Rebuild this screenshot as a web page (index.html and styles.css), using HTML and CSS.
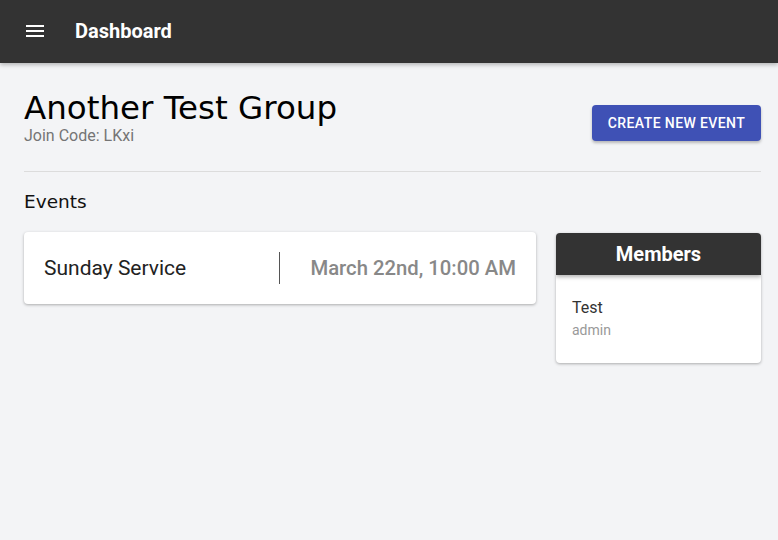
FILE: index.html
```html
<!DOCTYPE html>
<html>
<head>
<meta charset="utf-8">
<link rel="stylesheet" href="styles.css">
</head>
<body>
<header class="appbar">
  <svg class="menu" width="24" height="24" viewBox="0 0 24 24"><path d="M3 18h18v-2H3v2zm0-5h18v-2H3v2zm0-7v2h18V6H3z" fill="#fff"/></svg>
  <span class="appbar-title">Dashboard</span>
</header>
<main class="content">
  <section class="group-head">
    <div>
      <h1 class="group-title">Another Test Group</h1>
      <div class="join-code">Join Code: LKxi</div>
    </div>
    <button class="btn-primary">Create New Event</button>
  </section>
  <hr class="divider">
  <h2 class="section-title">Events</h2>
  <section class="columns">
    <div class="events">
      <div class="event-card">
        <span class="event-name">Sunday Service</span>
        <span class="event-sep"></span>
        <span class="event-date">March 22nd, 10:00 AM</span>
      </div>
    </div>
    <aside class="members">
      <div class="members-head">Members</div>
      <div class="members-body">
        <div class="member-name">Test</div>
        <div class="member-role">admin</div>
      </div>
    </aside>
  </section>
</main>
</body>
</html>
```
FILE: styles.css
```css
* { box-sizing: border-box; }
html, body { margin: 0; padding: 0; }
body {
  background: #f3f4f6;
  font-family: Roboto, "Liberation Sans", sans-serif;
  width: 778px;
  height: 540px;
  overflow: hidden;
}
.appbar {
  height: 63px;
  background: #333333;
  display: flex;
  align-items: center;
  padding-left: 23px;
  padding-bottom: 1px;
  box-shadow: 0 2px 4px rgba(0,0,0,0.25);
  position: relative;
}
.menu { display: block; }
.appbar-title {
  color: #fff;
  font-weight: 700;
  font-size: 20px;
  margin-left: 28px;
}
.content {
  padding: 0 17px 0 24px;
}
.group-head {
  display: flex;
  justify-content: space-between;
  align-items: flex-start;
  padding-top: 27px;
}
.group-title {
  margin: 0;
  font-family: "DejaVu Sans", sans-serif;
  font-weight: 400;
  font-size: 32.5px;
  line-height: 36px;
  color: #000;
}
.join-code {
  font-size: 16px;
  color: #757575;
  line-height: 18px;
  margin-top: 1px;
}
.btn-primary {
  margin-top: 15px;
  background: #3f51b5;
  color: #fff;
  border: none;
  border-radius: 4px;
  height: 36px;
  width: 169px;
  font-family: Roboto, sans-serif;
  font-weight: 500;
  font-size: 14px;
  letter-spacing: 0.4px;
  text-transform: uppercase;
  box-shadow: 0 2px 3px rgba(0,0,0,0.25);
}
.divider {
  border: none;
  border-top: 1px solid #dcdcdc;
  margin: 26px 0 0 0;
}
.section-title {
  margin: 19px 0 0 0;
  font-family: "DejaVu Sans", sans-serif;
  font-weight: 400;
  font-size: 18.5px;
  line-height: 22px;
  color: #111;
}
.columns {
  display: flex;
  gap: 20px;
  align-items: flex-start;
  margin-top: 19px;
}
.events { flex: 1; }
.event-card {
  background: #fff;
  border-radius: 4px;
  height: 72px;
  display: flex;
  align-items: center;
  padding: 0 20px;
  box-shadow: 0 1px 3px rgba(0,0,0,0.3);
}
.event-name {
  font-size: 21px;
  color: #222;
  width: 235px;
}
.event-sep {
  width: 1px;
  height: 32px;
  background: #555;
}
.event-date {
  flex: 1;
  text-align: right;
  font-size: 20.3px;
  font-weight: 500;
  color: #888;
}
.members {
  width: 205px;
  background: #fff;
  border-radius: 4px;
  box-shadow: 0 1px 3px rgba(0,0,0,0.3);
  overflow: hidden;
  margin-top: 1px;
}
.members-head {
  background: #333;
  color: #fff;
  height: 42px;
  display: flex;
  align-items: center;
  justify-content: center;
  font-size: 20px;
  font-weight: 700;
  box-shadow: 0 2px 4px rgba(0,0,0,0.3);
  position: relative;
}
.members-body {
  padding: 23px 16px 0;
  height: 88px;
}
.member-name {
  font-size: 16px;
  color: #333;
  line-height: 20px;
}
.member-role {
  font-size: 14px;
  color: #999;
  line-height: 18px;
  margin-top: 3px;
}
```
